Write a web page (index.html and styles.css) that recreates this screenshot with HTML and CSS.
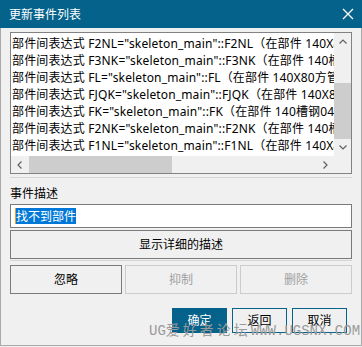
FILE: index.html
```html
<!DOCTYPE html>
<html lang="zh-CN">
<head>
  <meta charset="UTF-8" />
  <meta name="viewport" content="width=device-width, initial-scale=1" />
  <title>更新事件列表</title>
  <link rel="stylesheet" href="styles.css">
</head>
<body>
  <div class="dialog">
    <header class="titlebar">
      <span class="title">更新事件列表</span>
      <svg class="close" width="12" height="12" viewBox="0 0 12 12">
        <path d="M1 1 L11 11 M11 1 L1 11" stroke="#fff" stroke-width="1.3" fill="none" />
      </svg>
    </header>

    <div class="content">
      <div class="listbox">
        <div class="rows">
          <div class="row">部件间表达式 F2NL="skeleton_main"::F2NL（在部件 140X80方管02 中）</div>
          <div class="row">部件间表达式 F3NK="skeleton_main"::F3NK（在部件 140槽钢04 中）</div>
          <div class="row">部件间表达式 FL="skeleton_main"::FL（在部件 140X80方管01 中）</div>
          <div class="row">部件间表达式 FJQK="skeleton_main"::FJQK（在部件 140X80方管03 中）</div>
          <div class="row">部件间表达式 FK="skeleton_main"::FK（在部件 140槽钢04 中）</div>
          <div class="row">部件间表达式 F2NK="skeleton_main"::F2NK（在部件 140槽钢02 中）</div>
          <div class="row">部件间表达式 F1NL="skeleton_main"::F1NL（在部件 140X80方管01 中）</div>
        </div>
        <div class="vscroll">
          <span class="arrow">
            <svg width="8" height="5" viewBox="0 0 8 5"><path d="M0.5 4.5 L4 1 L7.5 4.5" stroke="#606060" stroke-width="1.2" fill="none" /></svg>
          </span>
          <span class="vtrack"><span class="thumb"></span></span>
          <span class="arrow">
            <svg width="8" height="5" viewBox="0 0 8 5"><path d="M0.5 0.5 L4 4 L7.5 0.5" stroke="#606060" stroke-width="1.2" fill="none" /></svg>
          </span>
        </div>
        <div class="hscroll">
          <span class="arrow">
            <svg width="5" height="8" viewBox="0 0 5 8"><path d="M4.5 0.5 L1 4 L4.5 7.5" stroke="#606060" stroke-width="1.2" fill="none" /></svg>
          </span>
          <span class="htrack"><span class="thumb"></span></span>
          <span class="arrow">
            <svg width="5" height="8" viewBox="0 0 5 8"><path d="M0.5 0.5 L4 4 L0.5 7.5" stroke="#606060" stroke-width="1.2" fill="none" /></svg>
          </span>
        </div>
        <div class="corner"></div>
      </div>

      <hr class="sep">

      <label class="field-label">事件描述</label>
      <div class="textbox"><span class="selected">找不到部件</span></div>
      <button class="btn wide">显示详细的描述</button>

      <hr class="sep">

      <div class="actions">
        <button class="btn">忽略</button>
        <button class="btn" disabled>抑制</button>
        <button class="btn" disabled>删除</button>
      </div>

      <div class="footer">
        <button class="btn primary">确定</button>
        <button class="btn">返回</button>
        <button class="btn">取消</button>
      </div>
    </div>

    <div class="watermark">UG<span class="wm-cn">爱好者论坛</span>WWW.UGSNX.COM</div>
  </div>
</body>
</html>
```

FILE: styles.css
```css
body {
  margin: 0;
  background: #f0f0f0;
  font-family: "Noto Sans", "Noto Sans CJK SC", sans-serif;
  font-size: 12px;
  color: #000;
}
.dialog {
  position: relative;
  width: 362px;
  height: 346px;
  box-sizing: border-box;
  border: 1px solid #a9a9a9;
  border-top: 0;
  background: #f0f0f0;
}
.titlebar {
  display: flex;
  align-items: center;
  justify-content: space-between;
  height: 28px;
  margin: 0 -1px;
  padding: 0 8px 0 9px;
  background: #04628b;
  color: #fff;
  line-height: 17px;
}
.close {
  display: block;
}
.content {
  padding: 4px 9px 0;
}

/* list with fake scrollbars */
.listbox {
  display: grid;
  grid-template-columns: 1fr 17px;
  grid-template-rows: 1fr 17px;
  height: 142px;
  box-sizing: border-box;
  border: 1px solid #828282;
  background: #fff;
}
.rows {
  overflow: hidden;
  padding: 2px 0 0 1px;
  line-height: 17px;
  letter-spacing: 0.15px;
  white-space: nowrap;
}
.vscroll {
  display: flex;
  flex-direction: column;
  background: #f0f0f0;
}
.hscroll {
  display: flex;
  background: #f0f0f0;
}
.corner {
  background: #f0f0f0;
}
.arrow {
  flex: none;
  width: 17px;
  height: 17px;
  display: flex;
  align-items: center;
  justify-content: center;
}
.vtrack {
  flex: 1;
  padding-top: 33px;
}
.vtrack .thumb {
  display: block;
  height: 56px;
  background: #cdcdcd;
}
.htrack {
  flex: 1;
  display: flex;
}
.htrack .thumb {
  width: 143px;
  margin-left: 1px;
  background: #cdcdcd;
}

.sep {
  height: 0;
  margin: 3px 0 0;
  border: 0;
  border-top: 1px solid #d5d5d5;
}
.field-label {
  display: block;
  margin-top: 7px;
  line-height: 17px;
}
.textbox {
  display: flex;
  height: 24px;
  box-sizing: border-box;
  margin-top: 2px;
  padding: 3px 4px;
  border: 1px solid #7a7a7a;
  background: #fff;
  line-height: 17px;
}
.selected {
  background: #0078d7;
  color: #fff;
  border-left: 1px solid #f39a2a;
}
.btn {
  box-sizing: border-box;
  padding: 0;
  border: 1px solid #7a7a7a;
  background: #f0f0f0;
  color: #000;
  font: inherit;
  line-height: 17px;
}
.btn:disabled {
  border-color: #cccccc;
  color: #a0a0a0;
}
.wide {
  display: block;
  width: 100%;
  height: 29px;
  margin-top: 2px;
}
.wide + .sep {
  margin-top: 1px;
}
.actions {
  display: grid;
  grid-template-columns: repeat(3, 1fr);
  gap: 3px;
  margin-top: 4px;
}
.actions .btn {
  height: 29px;
}
.footer {
  display: flex;
  justify-content: flex-end;
  gap: 5px;
  margin: 14px 5px 0 0;
}
.footer .btn {
  width: 55px;
  height: 25px;
  border-color: #04628b;
}
.footer .primary {
  background: #04628b;
  color: #fff;
}

.watermark {
  position: absolute;
  left: 148px;
  top: 322px;
  font-family: "Liberation Mono", "Noto Sans CJK SC", monospace;
  font-size: 14px;
  line-height: 18px;
  color: #9a9a9a;
  white-space: nowrap;
}
.wm-cn {
  letter-spacing: 3px;
}
```
